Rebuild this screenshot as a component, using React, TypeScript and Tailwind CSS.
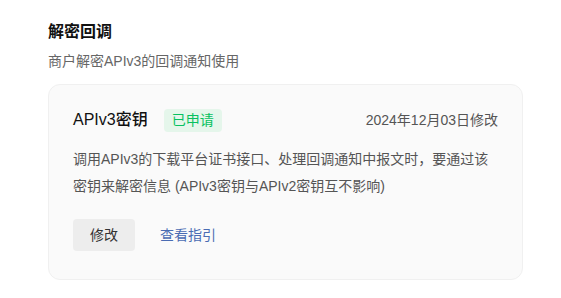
export default function App() {
  return (
    <div
      className="w-[561px] h-[298px] bg-white pl-12 pr-[38px] pt-[20px]"
      style={{ fontFamily: '"Liberation Sans", "Noto Sans CJK SC", sans-serif' }}
    >
      <h2 className="text-[16px] leading-[24px] font-bold text-[#111]">解密回调</h2>
      <p className="mt-[6px] text-[14px] leading-[22px] text-[#666]">商户解密APIv3的回调通知使用</p>

      <div className="mt-[12px] rounded-[12px] border border-[#f0f0f0] bg-[#fafafa] px-6 pt-[23px] pb-[28px]">
        <div className="flex items-center justify-between h-[24px]">
          <div className="flex items-center">
            <span className="text-[16px] font-medium text-[#111]">APIv3密钥</span>
            <span className="ml-4 h-[23px] px-[8px] rounded-[4px] bg-[#e5f6eb] text-[#07c160] text-[14px] leading-[23px]">
              已申请
            </span>
          </div>
          <span className="text-[14px] text-[#555]">2024年12月03日修改</span>
        </div>

        <p className="mt-[14px] text-[14px] leading-[27px] text-[#555]">
          调用APIv3的下载平台证书接口、处理回调通知中报文时，要通过该
          <br />
          密钥来解密信息 (APIv3密钥与APIv2密钥互不影响)
        </p>

        <div className="mt-[19px] flex items-center">
          <button className="h-[32px] w-[62px] rounded-[4px] bg-[#ededed] text-[14px] text-[#333]">
            修改
          </button>
          <a className="ml-[25px] text-[14px] text-[#4a6cb3] cursor-pointer">查看指引</a>
        </div>
      </div>
    </div>
  );
}
